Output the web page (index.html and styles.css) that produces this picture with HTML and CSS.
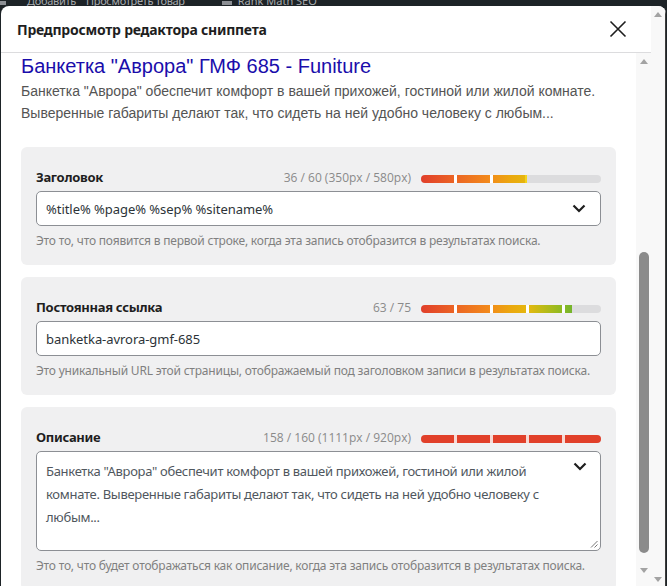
FILE: index.html
```html
<!DOCTYPE html>
<html lang="ru">
<head>
<meta charset="utf-8">
<title>Предпросмотр редактора сниппета</title>
<link rel="stylesheet" href="styles.css">
</head>
<body>
<div class="adminbar">
  <span class="ab-icon"></span>
  <span class="ab-item ab-add">Добавить</span>
  <span class="ab-item ab-view">Просмотреть товар</span>
  <span class="ab-rm-icon"></span>
  <span class="ab-item">Rank Math SEO</span>
</div>
<div class="modal">
  <div class="modal-main">
    <div class="modal-header">
      <h1 class="modal-title">Предпросмотр редактора сниппета</h1>
      <button class="close" aria-label="Закрыть">
        <svg width="18" height="18" viewBox="0 0 18 18"><path d="M1.5 1.5 L16.5 16.5 M16.5 1.5 L1.5 16.5" stroke="#1e1e1e" stroke-width="1.6" fill="none"/></svg>
      </button>
    </div>
    <div class="modal-body">
      <div class="content">
        <div class="serp">
          <div class="serp-title">Банкетка "Аврора" ГМФ 685 - Funiture</div>
          <div class="serp-desc">Банкетка "Аврора" обеспечит комфорт в вашей прихожей, гостиной или жилой комнате. Выверенные габариты делают так, что сидеть на ней удобно человеку с любым...</div>
        </div>

        <div class="card">
          <div class="field-head">
            <span class="label">Заголовок</span>
            <span class="counter">36 / 60 (350px / 580px)</span>
            <span class="bar"><span class="fill fill-tick" style="width:59%"></span></span>
          </div>
          <div class="input">
            <span class="input-text">%title% %page% %sep% %sitename%</span>
            <svg class="chev" width="14" height="9" viewBox="0 0 14 9"><path d="M1.5 1.5 L7 7 L12.5 1.5" stroke="#1e1e1e" stroke-width="2.2" fill="none"/></svg>
          </div>
          <div class="help">Это то, что появится в первой строке, когда эта запись отобразится в результатах поиска.</div>
        </div>

        <div class="card">
          <div class="field-head">
            <span class="label">Постоянная ссылка</span>
            <span class="counter">63 / 75</span>
            <span class="bar"><span class="fill" style="width:84%"></span></span>
          </div>
          <div class="input">
            <span class="input-text">banketka-avrora-gmf-685</span>
          </div>
          <div class="help">Это уникальный URL этой страницы, отображаемый под заголовком записи в результатах поиска.</div>
        </div>

        <div class="card">
          <div class="field-head">
            <span class="label">Описание</span>
            <span class="counter">158 / 160 (1111px / 920px)</span>
            <span class="bar"><span class="fill fill-over" style="width:100%"></span></span>
          </div>
          <div class="textarea">
            <span class="textarea-text">Банкетка "Аврора" обеспечит комфорт в вашей прихожей, гостиной или жилой комнате. Выверенные габариты делают так, что сидеть на ней удобно человеку с любым...</span>
            <svg class="chev" width="14" height="9" viewBox="0 0 14 9"><path d="M1.5 1.5 L7 7 L12.5 1.5" stroke="#1e1e1e" stroke-width="2.2" fill="none"/></svg>
            <svg class="grip" width="8" height="8" viewBox="0 0 8 8"><path d="M7.5 1 L1 7.5 M7.5 4.5 L4.5 7.5" stroke="#777" stroke-width="1" fill="none"/></svg>
          </div>
          <div class="help">Это то, что будет отображаться как описание, когда эта запись отобразится в результатах поиска.</div>
        </div>
      </div>
      <div class="sbar sbar-inner">
        <span class="arrow-up"></span>
        <span class="thumb"></span>
        <span class="arrow-down"></span>
      </div>
    </div>
  </div>
  <div class="sbar sbar-outer">
    <span class="arrow-up"></span>
    <span class="sbar-space"></span>
    <span class="arrow-down"></span>
  </div>
</div>
</body>
</html>
```

FILE: styles.css
```css
* { box-sizing: border-box; }
html, body { margin: 0; padding: 0; }
body {
  width: 667px;
  height: 586px;
  overflow: hidden;
  background: #1d2327;
  font-family: "Noto Sans", "Open Sans", sans-serif;
}

.adminbar {
  height: 6px;
  overflow: hidden;
  display: flex;
  align-items: flex-start;
  color: #a7aaad;
  font-size: 11px;
  line-height: 2px;
  white-space: nowrap;
}
.ab-icon {
  width: 6px;
  height: 4px;
  margin-top: 1px;
  background: #8c8f94;
}
.ab-add { margin-left: 21px; letter-spacing: -0.3px; }
.ab-view { margin-left: 10px; letter-spacing: -0.3px; }
.ab-rm-icon {
  width: 10px;
  height: 4px;
  margin: 1px 6px 0 37px;
  background: #8c8f94;
}

.modal {
  display: flex;
  margin-left: 1px;
  width: 665px;
  height: 580px;
  background: #fff;
  border-radius: 8px 8px 0 0;
  overflow: hidden;
}
.modal-main {
  flex: 1;
  display: flex;
  flex-direction: column;
  min-width: 0;
}
.modal-header {
  height: 47px;
  flex: none;
  display: flex;
  align-items: center;
  justify-content: space-between;
  padding: 0 21px 0 16px;
  border-bottom: 1px solid #dcdcde;
}
.modal-title {
  margin: 0;
  font-size: 14px;
  font-weight: 700;
  letter-spacing: -0.25px;
  color: #1e1e1e;
}
.close {
  width: 24px;
  height: 24px;
  padding: 0;
  border: 0;
  background: none;
  display: flex;
  align-items: center;
  justify-content: center;
}

.modal-body {
  flex: 1;
  display: flex;
  overflow: hidden;
}
.content {
  flex: 1;
  padding: 0 20px;
  overflow: hidden;
}

.serp { padding-top: 1px; margin-bottom: 23px; }
.serp-title {
  font-family: "Liberation Sans", Arial, sans-serif;
  font-size: 20px;
  line-height: 24px;
  color: #1a0dab;
  margin-bottom: 2px;
}
.serp-desc {
  font-family: "Liberation Sans", Arial, sans-serif;
  font-size: 14px;
  line-height: 22px;
  color: #545454;
}

.card {
  background: #f0f0f1;
  border-radius: 6px;
  padding: 19px 15px 15px;
  margin-bottom: 12px;
}
.field-head {
  display: flex;
  align-items: center;
  height: 22px;
  margin-bottom: 3px;
}
.label {
  flex: 1;
  font-size: 13px;
  font-weight: 700;
  letter-spacing: -0.3px;
  color: #1e1e1e;
}
.counter {
  font-family: "Open Sans", sans-serif;
  font-size: 12px;
  color: #8a8a8a;
  margin-right: 10px;
}
.bar {
  position: relative;
  width: 180px;
  height: 8px;
  border-radius: 4px;
  background: #dcdcde;
  overflow: hidden;
  margin-top: 3px;
}
.fill {
  display: block;
  height: 100%;
  background-image:
    repeating-linear-gradient(90deg, transparent 0 33px, #fff 33px 36px),
    linear-gradient(90deg, #e13f2b 0, #ec6724 20%, #f28a1b 38%, #eba80e 50%, #e3b80f 60%, #bcbb17 68%, #8fba22 78%, #62b133 88%, #55ad3a 100%);
  background-size: 177px 100%, 180px 100%;
  background-repeat: no-repeat;
}
.fill-tick { border-right: 2px solid #f4d31c; }
.fill-over {
  background-image:
    repeating-linear-gradient(90deg, transparent 0 33px, #f7d9d4 33px 36px),
    linear-gradient(#e1402a, #e1402a);
  background-size: 177px 100%, 180px 100%;
  background-repeat: no-repeat;
}

.input {
  height: 35px;
  background: #fff;
  border: 1px solid #8c8f94;
  border-radius: 5px;
  display: flex;
  align-items: center;
  justify-content: space-between;
  padding: 0 14px 0 9px;
}
.input-text {
  font-size: 13px;
  letter-spacing: -0.05px;
  color: #2c3338;
}
.textarea {
  position: relative;
  height: 100px;
  background: #fff;
  border: 1px solid #8c8f94;
  border-radius: 5px;
  padding: 7px 40px 0 9px;
}
.textarea-text {
  font-size: 13px;
  line-height: 21px;
  letter-spacing: -0.3px;
  color: #50575e;
}
.textarea .chev {
  position: absolute;
  top: 10px;
  right: 13px;
}
.grip {
  position: absolute;
  right: 2px;
  bottom: 2px;
}
.help {
  margin-top: 5px;
  font-size: 12px;
  line-height: 19px;
  letter-spacing: -0.2px;
  color: #808080;
}

.sbar {
  width: 14px;
  flex: none;
  display: flex;
  flex-direction: column;
  align-items: center;
  background: #f8f8f8;
}
.sbar-inner { width: 15px; }
.arrow-up, .arrow-down {
  width: 0;
  height: 0;
  border-left: 4px solid transparent;
  border-right: 4px solid transparent;
}
.arrow-up {
  border-bottom: 5px solid #a3a3a3;
  margin-top: 6px;
}
.arrow-down {
  border-top: 5px solid #a3a3a3;
  margin-top: auto;
  margin-bottom: 4px;
}
.sbar-inner .thumb {
  width: 10px;
  height: 301px;
  margin-top: 188px;
  border-radius: 5px;
  background: #8b8b8b;
}
.sbar-inner .arrow-down { margin-top: 15px; }
.sbar-space { flex: 1; }
.sbar-outer { border-right: 1px solid #3c3c3c; width: 15px; }
```
